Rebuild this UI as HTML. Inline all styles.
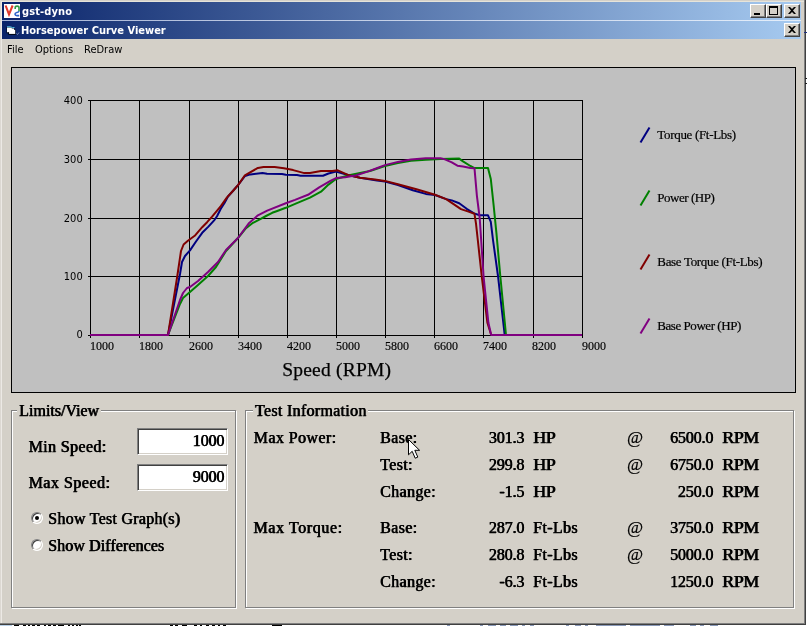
<!DOCTYPE html>
<html><head><meta charset="utf-8"><title>gst-dyno</title>
<style>
html,body{margin:0;padding:0;}
body{width:807px;height:626px;overflow:hidden;background:#fff;position:relative;font-family:"Liberation Serif",serif;color:#000;}
.abs{position:absolute;}
#win{position:absolute;left:0;top:0;width:805px;height:624px;background:#d4d0c8;}
.tb{position:absolute;left:2px;width:799px;height:18px;background:linear-gradient(to right,#0a246a 0%,#a6caf0 100%);}
.tt{position:absolute;color:#fff;font:bold 11px "DejaVu Sans Condensed","Liberation Sans",sans-serif;white-space:nowrap;line-height:13px;}
.btn{position:absolute;width:16px;height:14px;background:#d4d0c8;box-sizing:border-box;border:1px solid;border-color:#fff #404040 #404040 #fff;box-shadow:inset -1px -1px 0 #808080;}
.menu{position:absolute;font:11px "DejaVu Sans Condensed","Liberation Sans",sans-serif;white-space:nowrap;line-height:13px;}
.t16{position:absolute;font:16px "Liberation Serif",serif;white-space:nowrap;line-height:18px;-webkit-text-stroke:0.25px #000;text-shadow:0.6px 0 0 #000;letter-spacing:0.35px;}
.t16.r{letter-spacing:-0.15px;}
.wd{display:inline-block;transform:scaleX(1.12);transform-origin:0 50%;letter-spacing:-0.4px;}
.at{font-size:17.5px;letter-spacing:0;text-shadow:none;-webkit-text-stroke:0.2px #000;position:relative;top:-1.5px;}
.r{text-align:right;}
.frame{position:absolute;box-sizing:border-box;border:1px solid #808080;box-shadow:1px 1px 0 #fff, inset 1px 1px 0 #fff;}
.flabel{position:absolute;background:#d4d0c8;padding:0 2px;}
.edit{position:absolute;box-sizing:border-box;background:#fff;border:1px solid;border-color:#808080 #fff #fff #808080;box-shadow:inset 1px 1px 0 #404040, inset -1px -1px 0 #d4d0c8;}
.radio{position:absolute;width:12px;height:12px;border-radius:50%;box-sizing:border-box;background:#fff;border:1px solid;border-color:#808080 #fff #fff #808080;box-shadow:inset 1px 1px 0 #404040, inset -1px -1px 0 #d4d0c8;}
</style></head><body>
<div id="gaa" style="position:absolute;left:0;top:0;width:807px;height:626px;will-change:transform;">
<div id="win">
  <!-- outer window title -->
  <div class="tb" style="top:2px"></div>
  <div class="abs" style="left:2px;top:20px;width:799px;height:1px;background:linear-gradient(to right,#a9b6d6,#e4eefa)"></div>
  <div class="tb" style="top:21px"></div>
  <!-- icons -->
  <svg class="abs" style="left:4px;top:4px" width="16" height="14" viewBox="0 0 16 14">
    <rect width="16" height="14" fill="#fff"/>
    <path d="M1.6 1.5 L5 10.4 L8.6 1.5" fill="none" stroke="#e23a2c" stroke-width="2.1" stroke-linejoin="miter"/>
    <path d="M11.2 5 V3.4 Q11.2 2.1 13.1 2.1 Q15 2.1 15 3.6 V7.2" fill="none" stroke="#2f9a45" stroke-width="1.6"/>
    <path d="M15 7.2 Q14.8 8.2 12.9 8.5 Q10.9 8.9 11 10.3 Q11.1 11.6 13 11.6 H15.2" fill="none" stroke="#2a62c8" stroke-width="1.6"/>
  </svg>
  <svg class="abs" style="left:5px;top:25px" width="15" height="11" viewBox="0 0 15 11">
    <path d="M1.5 2 H6 L7 3 H9.5 V4.5 H10.8 V9.8 H3.5 V8.2 H1.5 Z" fill="#000814"/>
    <path d="M2 2.6 H6 L7 3.6 H9 V7.2 H2 Z" fill="#fff"/>
    <path d="M4 4.8 H10.2 V9 H4 Z" fill="#fff"/>
    <path d="M3.6 7.4 V9.4 H10.4" fill="none" stroke="#000814" stroke-width="0.8"/>
    <path d="M2 1.8 H5.5 L7.5 2.6 H9.5" fill="none" stroke="#58c8e8" stroke-width="1"/>
    <path d="M11.5 8.5 L12.5 9.5 L14 7.5" fill="none" stroke="#8fa0c0" stroke-width="0.8"/>
  </svg>
  <div class="tt" id="t1" style="left:22px;top:5px;letter-spacing:0.12px">gst-dyno</div>
  <div class="tt" id="t2" style="left:21px;top:24px;">Horsepower Curve Viewer</div>
  <!-- buttons -->
  <div class="btn" style="left:750px;top:4px"><div class="abs" style="left:3px;top:8px;width:6px;height:2px;background:#000"></div></div>
  <div class="btn" style="left:766px;top:4px"><div class="abs" style="left:2px;top:1px;width:9px;height:9px;box-sizing:border-box;border:1px solid #000;border-top-width:2px"></div></div>
  <div class="btn" style="left:784px;top:4px"><svg class="abs" style="left:3px;top:2px" width="8" height="7" viewBox="0 0 8 7"><path d="M0 0 H2 L4 2 L6 0 H8 L5 3.5 L8 7 H6 L4 5 L2 7 H0 L3 3.5 Z" fill="#000"/></svg></div>
  <div class="btn" style="left:784px;top:23px"><svg class="abs" style="left:3px;top:2px" width="8" height="7" viewBox="0 0 8 7"><path d="M0 0 H2 L4 2 L6 0 H8 L5 3.5 L8 7 H6 L4 5 L2 7 H0 L3 3.5 Z" fill="#000"/></svg></div>
  <!-- menu -->
  <div class="menu" id="m1" style="left:7px;top:43px">File</div>
  <div class="menu" id="m2" style="left:35px;top:43px">Options</div>
  <div class="menu" id="m3" style="left:84px;top:43px">ReDraw</div>

  <!-- chart panel -->
  <div class="abs" id="chart" style="left:11px;top:67px;width:785px;height:326px;box-sizing:border-box;background:#c0c0c0;border:1px solid #000;"></div>
  <svg class="abs" id="plot" style="left:0;top:0" width="807" height="400" viewBox="0 0 807 400">
    <g stroke="#000" stroke-width="1" shape-rendering="crispEdges" fill="none">
      <path d="M90.5 100 V338 M139.5 100 V338 M189.5 100 V338 M238.5 100 V338 M287.5 100 V338 M336.5 100 V338 M385.5 100 V338 M434.5 100 V338 M483.5 100 V338 M533.5 100 V338 M582.5 100 V338"/>
      <path d="M88 100.5 H583 M88 159.5 H583 M88 218.5 H583 M88 276.5 H583 M88 335.5 H583"/>
    </g>
    <g fill="none" stroke-width="2" stroke-linejoin="round" stroke-linecap="butt">
      <polyline id="cT" stroke="#000080" points="90,335 168,335 180,274 182,262 185,256 190,250.4 196,241.5 202.2,232.8 208.4,226.6 214.6,219.8 217,216.2 220.8,208.8 224.5,203 228,196.5 233.8,190 238.4,184.6 245,176 250.4,174.4 262.5,173 267,173.8 282,174 285.8,174.8 297,175 300.6,175.7 323,175.7 328.5,173.5 336,171.6 349,175.3 360,177.7 377,180.5 385,181.5 398,185 412.8,190.2 425.8,193.9 435,195 446.2,199.1 451.8,200.4 459.2,203.2 466.7,208.8 474,213.4 479.7,215.3 488,215.3 490.8,221.8 493,240 498,276 504.7,335"/>
      <polyline id="cP" stroke="#008000" points="90,335 168,335 180,304 183,298 190,292 198,285 208,276 216,267 226,251 238,238 246,228.2 253,222.8 259.8,219.4 266,216 272.2,212.8 276.5,211.2 285.8,207.8 296.9,203.2 310,197.6 321,191.7 328.5,184.6 336,179 349,175.3 360,173 370,171 384.9,166 397.9,163 410.9,160.8 425.8,159.8 440.6,159 459.2,158.6 463,161.4 470.4,166 474,167.9 488,167.9 490.8,179 493.6,205 496.4,232.9 500.3,276 506,335"/>
      <polyline id="cBT" stroke="#800000" points="90,335 168,335 177.3,276 181,251 183.6,244.5 187.9,240.8 194.7,235.8 202.2,227.2 207.1,222.2 212.1,216.6 220.8,206.1 227,197.4 233.8,190 238.4,184.6 244.9,175.3 257.9,167.9 263.5,167 274.6,167 283.9,168.3 293.2,170.1 304.3,173.1 310,173 321,171 332.2,171 337.8,170.3 349,175.3 360,177.7 375,179.4 384.9,180.9 397.9,184.2 416.5,189.3 435,194.8 446.2,199.1 453.6,204.1 461,209.1 468.5,211.6 474.5,213.8 476,223.6 477.8,240 481.7,276 487.4,322.8 491.2,335"/>
      <polyline id="cBP" stroke="#800080" points="90,335 168,335 180,300 183,293 187,288 190,287 198,281 208,272 218,262 226,250 238,238 248.6,223.6 257.9,215.3 267.2,210.6 285.8,203.2 295,199.9 308,194.8 319.2,187.4 330.4,180.9 336,178.1 345.2,177.2 356.4,175.3 367.5,171.6 378.7,167.5 384.9,165.1 397.9,161.9 410.9,159.5 425.8,158.2 440.6,158.2 444.3,159.1 451.8,162.3 457.4,165.7 463,166.6 470.4,167.9 474.5,168.3 476.9,195.8 479.7,218 483.6,276.8 488.4,322.8 491.2,335 582,335"/>
    </g>
    <g font-family="'DejaVu Sans Condensed','Liberation Sans',sans-serif" font-size="11" text-anchor="end" fill="#000">
      <text x="82.7" y="103.8">400</text><text x="82.7" y="162.8">300</text><text x="82.7" y="221.8">200</text><text x="82.7" y="279.8">100</text><text x="82.7" y="338.4">0</text>
    </g>
    <g font-family="'Liberation Serif',serif" font-size="12" fill="#000" stroke="#000" stroke-width="0.15">
      <text x="90" y="349.5">1000</text><text x="139" y="349.5">1800</text><text x="189" y="349.5">2600</text><text x="238" y="349.5">3400</text><text x="287" y="349.5">4200</text><text x="336" y="349.5">5000</text><text x="385" y="349.5">5800</text><text x="434" y="349.5">6600</text><text x="483" y="349.5">7400</text><text x="532" y="349.5">8200</text><text x="582" y="349.5">9000</text>
    </g>
    <text x="282.2" y="376.2" font-family="'Liberation Serif',serif" font-size="19.5" letter-spacing="0.22" fill="#000" stroke="#000" stroke-width="0.25">Speed (RPM)</text>
    <g stroke-width="2" fill="none">
      <path d="M640.5 142.5 L649.5 127.5" stroke="#000080"/>
      <path d="M640.5 205.5 L649.5 190.5" stroke="#008000"/>
      <path d="M640.5 269.5 L649.5 254.5" stroke="#800000"/>
      <path d="M640.5 333.5 L649.5 318.5" stroke="#800080"/>
    </g>
    <g font-family="'Liberation Serif',serif" font-size="13" fill="#000" stroke="#000" stroke-width="0.2">
      <text x="657.3" y="139" letter-spacing="-0.32">Torque (Ft-Lbs)</text>
      <text x="657.3" y="202" letter-spacing="-0.46">Power (HP)</text>
      <text x="657.3" y="266" letter-spacing="-0.33">Base Torque (Ft-Lbs)</text>
      <text x="657.3" y="330" letter-spacing="-0.45">Base Power (HP)</text>
    </g>
  </svg>

  <!-- Limits/View frame -->
  <div class="frame" style="left:11px;top:410px;width:225px;height:198px"></div>
  <div class="t16 flabel" style="left:17px;top:402px;letter-spacing:0">Limits/View</div>
  <div class="t16" style="left:28.4px;top:438px;letter-spacing:0.38px">Min Speed:</div>
  <div class="t16" style="left:28.4px;top:474px;letter-spacing:0.5px">Max Speed:</div>
  <div class="edit" style="left:137px;top:428px;width:91px;height:27px"></div>
  <div class="edit" style="left:137px;top:464px;width:91px;height:27px"></div>
  <div class="t16 r" style="left:150px;width:74px;top:432px">1000</div>
  <div class="t16 r" style="left:150px;width:74px;top:468px">9000</div>
  <div class="radio" style="left:31px;top:512px"><div class="abs" style="left:3px;top:3px;width:4px;height:4px;border-radius:50%;background:#000"></div></div>
  <div class="radio" style="left:31px;top:539px"></div>
  <div class="t16" style="left:48px;top:510px;letter-spacing:0.26px">Show Test Graph(s)</div>
  <div class="t16" style="left:48px;top:537px;letter-spacing:0.08px">Show Differences</div>

  <!-- Test Information frame -->
  <div class="frame" style="left:245px;top:410px;width:549px;height:198px"></div>
  <div class="t16 flabel" style="left:252.8px;top:402px;letter-spacing:0.3px">Test Information</div>
  <div class="t16" style="left:253.5px;top:429px;letter-spacing:0.42px">Max Power:</div>
  <div class="t16" style="left:253.3px;top:519px;letter-spacing:0.6px">Max Torque:</div>
  <!-- rows -->
  <div class="t16" style="left:380px;top:429px">Base:</div>
  <div class="t16" style="left:380px;top:456px">Test:</div>
  <div class="t16" style="left:380px;top:483px">Change:</div>
  <div class="t16" style="left:380px;top:519px">Base:</div>
  <div class="t16" style="left:380px;top:546px">Test:</div>
  <div class="t16" style="left:380px;top:573px">Change:</div>
  <div class="t16 r" style="left:450px;width:74px;top:429px">301.3</div>
  <div class="t16 r" style="left:450px;width:74px;top:456px">299.8</div>
  <div class="t16 r" style="left:450px;width:74px;top:483px">-1.5</div>
  <div class="t16 r" style="left:450px;width:74px;top:519px">287.0</div>
  <div class="t16 r" style="left:450px;width:74px;top:546px">280.8</div>
  <div class="t16 r" style="left:450px;width:74px;top:573px">-6.3</div>
  <div class="t16" style="left:533px;top:429px"><span class="wd">HP</span></div>
  <div class="t16" style="left:533px;top:456px"><span class="wd">HP</span></div>
  <div class="t16" style="left:533px;top:483px"><span class="wd">HP</span></div>
  <div class="t16" style="left:533px;top:519px">Ft-Lbs</div>
  <div class="t16" style="left:533px;top:546px">Ft-Lbs</div>
  <div class="t16" style="left:533px;top:573px">Ft-Lbs</div>
  <div class="t16" style="left:627px;top:429px"><span class="at">@</span></div>
  <div class="t16" style="left:627px;top:456px"><span class="at">@</span></div>
  <div class="t16" style="left:627px;top:519px"><span class="at">@</span></div>
  <div class="t16" style="left:627px;top:546px"><span class="at">@</span></div>
  <div class="t16 r" style="left:640px;width:73px;top:429px">6500.0</div>
  <div class="t16 r" style="left:640px;width:73px;top:456px">6750.0</div>
  <div class="t16 r" style="left:640px;width:73px;top:483px">250.0</div>
  <div class="t16 r" style="left:640px;width:73px;top:519px">3750.0</div>
  <div class="t16 r" style="left:640px;width:73px;top:546px">5000.0</div>
  <div class="t16 r" style="left:640px;width:73px;top:573px">1250.0</div>
  <div class="t16" style="left:722px;top:429px"><span class="wd">RPM</span></div>
  <div class="t16" style="left:722px;top:456px"><span class="wd">RPM</span></div>
  <div class="t16" style="left:722px;top:483px"><span class="wd">RPM</span></div>
  <div class="t16" style="left:722px;top:519px"><span class="wd">RPM</span></div>
  <div class="t16" style="left:722px;top:546px"><span class="wd">RPM</span></div>
  <div class="t16" style="left:722px;top:573px"><span class="wd">RPM</span></div>

  <!-- cursor -->
  <svg class="abs" style="left:408px;top:439px" width="13" height="21" viewBox="0 0 13 21">
    <path d="M0.5 0.5 V15.8 L4.2 12.3 L7.2 19.2 L9.8 18.1 L6.8 11.3 H11.6 Z" fill="#fff" stroke="#000" stroke-width="1"/>
  </svg>
</div>
<svg class="abs" style="left:0;top:624px" width="807" height="2" viewBox="0 0 807 2" shape-rendering="crispEdges">
<rect x="0" y="0" width="807" height="2" fill="#fff"/>
<rect x="0" y="1" width="12" height="1" fill="#b8d0e8"/>
<g fill="#000"><rect x="14" y="1" width="5" height="1"/><rect x="23" y="1" width="3" height="1"/><rect x="28" y="1" width="2" height="1"/><rect x="32" y="1" width="3" height="1"/><rect x="37" y="1" width="3" height="1"/><rect x="44" y="1" width="2" height="1"/><rect x="48" y="1" width="3" height="1"/><rect x="53" y="1" width="3" height="1"/><rect x="58" y="1" width="6" height="1"/><rect x="68" y="1" width="2" height="1"/><rect x="72" y="1" width="2" height="1"/><rect x="76" y="1" width="2" height="1"/><rect x="79" y="1" width="2" height="1"/>
<rect x="170" y="1" width="3" height="1"/><rect x="175" y="1" width="3" height="1"/><rect x="182" y="1" width="5" height="1"/><rect x="194" y="1" width="3" height="1"/><rect x="200" y="1" width="2" height="1"/><rect x="206" y="1" width="3" height="1"/><rect x="212" y="1" width="3" height="1"/><rect x="218" y="1" width="2" height="1"/><rect x="223" y="1" width="3" height="1"/><rect x="272" y="1" width="10" height="1"/></g>
<g fill="#8898b8"><rect x="447" y="1" width="3" height="1"/><rect x="480" y="1" width="3" height="1"/><rect x="488" y="1" width="8" height="1"/><rect x="500" y="1" width="6" height="1"/><rect x="510" y="1" width="8" height="1"/><rect x="522" y="1" width="3" height="1"/><rect x="530" y="1" width="4" height="1"/><rect x="566" y="1" width="3" height="1"/><rect x="575" y="1" width="6" height="1"/><rect x="585" y="1" width="3" height="1"/><rect x="596" y="1" width="30" height="1"/><rect x="630" y="1" width="30" height="1"/><rect x="664" y="1" width="10" height="1"/><rect x="690" y="1" width="6" height="1"/><rect x="700" y="1" width="4" height="1"/><rect x="710" y="1" width="8" height="1"/></g>
</svg>
<!-- edges -->
<div class="abs" style="left:0;top:0;width:806px;height:1px;background:#d4d0c8"></div>
<div class="abs" style="left:0;top:0;width:1px;height:623px;background:#dcd8d2"></div>
<div class="abs" style="left:1px;top:1px;width:803px;height:1px;background:#e6e4da"></div>
<div class="abs" style="left:1px;top:1px;width:1px;height:622px;background:#ece9e5"></div>
<div class="abs" style="left:804px;top:0;width:1px;height:624px;background:#808080"></div>
<div class="abs" style="left:805px;top:0;width:1px;height:625px;background:#404040"></div>
<div class="abs" style="left:0;top:623px;width:805px;height:1px;background:#808080"></div>
<div class="abs" style="left:0;top:624px;width:806px;height:1px;background:#404040"></div>
<div class="abs" style="left:804px;top:32px;width:3px;height:1px;background:#203080"></div>
<div class="abs" style="left:805px;top:78px;width:2px;height:1px;background:#202020"></div>
<div class="abs" style="left:805px;top:83px;width:2px;height:1px;background:#202020"></div>
</div>
</body></html>
